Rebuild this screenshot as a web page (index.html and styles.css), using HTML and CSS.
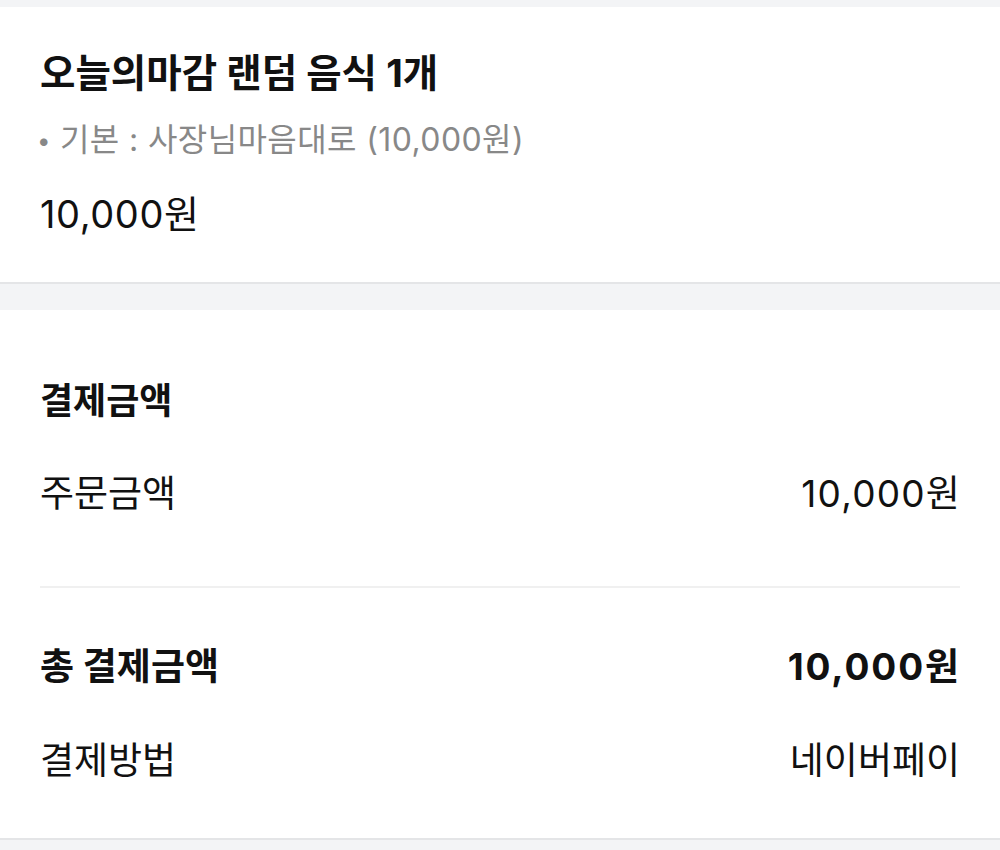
FILE: index.html
```html
<!DOCTYPE html>
<html lang="ko">
<head>
<meta charset="utf-8">
<link rel="stylesheet" href="styles.css">
</head>
<body>
<div class="page">
  <section class="card item">
    <h2 class="item-title">오늘의마감 랜덤 음식 1개</h2>
    <p class="item-option"><span class="bullet">•</span>기본 : 사장님마음대로 (10,000원)</p>
    <p class="item-price">10,000원</p>
  </section>
  <section class="card pay">
    <h3 class="pay-title">결제금액</h3>
    <div class="row"><span>주문금액</span><span class="amount">10,000원</span></div>
    <hr class="divider">
    <div class="row total"><span>총 결제금액</span><span class="amount">10,000원</span></div>
    <div class="row"><span>결제방법</span><span>네이버페이</span></div>
  </section>
</div>
</body>
</html>
```
FILE: styles.css
```css
* { box-sizing: border-box; margin: 0; padding: 0; }
html, body { background: #f3f4f6; }
body {
  font-family: "Inter", "Noto Sans CJK KR", sans-serif;
  color: #111;
  width: 1000px;
  height: 850px;
  overflow: hidden;
}
.page {
  padding-top: 7px;
  display: flex;
  flex-direction: column;
  gap: 26px;
}
.card {
  background: #fff;
  border-bottom: 2px solid #e4e5e7;
  padding: 0 40px;
}
.item { height: 277px; padding-top: 46px; }
.item-title { font-size: 38.5px; font-weight: 700; line-height: 40px; }
.item-option { font-size: 32px; font-weight: 400; color: #888; line-height: 40px; margin-top: 27px; letter-spacing: 0.4px; }
.bullet { font-size: 24px; margin-left: -3px; margin-right: 9px; vertical-align: 2px; }
.item-price { font-size: 38px; font-weight: 400; line-height: 40px; margin-top: 33px; letter-spacing: 0.6px; }
.pay { height: 530px; padding-top: 71px; }
.pay-title { font-size: 36px; font-weight: 700; line-height: 40px; }
.row {
  display: flex;
  justify-content: space-between;
  align-items: center;
  font-size: 37px;
  line-height: 40px;
}
.amount { letter-spacing: 1.2px; margin-right: -1px; }
.total .amount { letter-spacing: 1.9px; }
.pay-title + .row { margin-top: 53px; }
.divider {
  border: 0;
  height: 2px;
  background: #f0f0f0;
  margin-top: 72px;
}
.total { font-weight: 700; margin-top: 59px; }
.total + .row { margin-top: 54px; }
```
